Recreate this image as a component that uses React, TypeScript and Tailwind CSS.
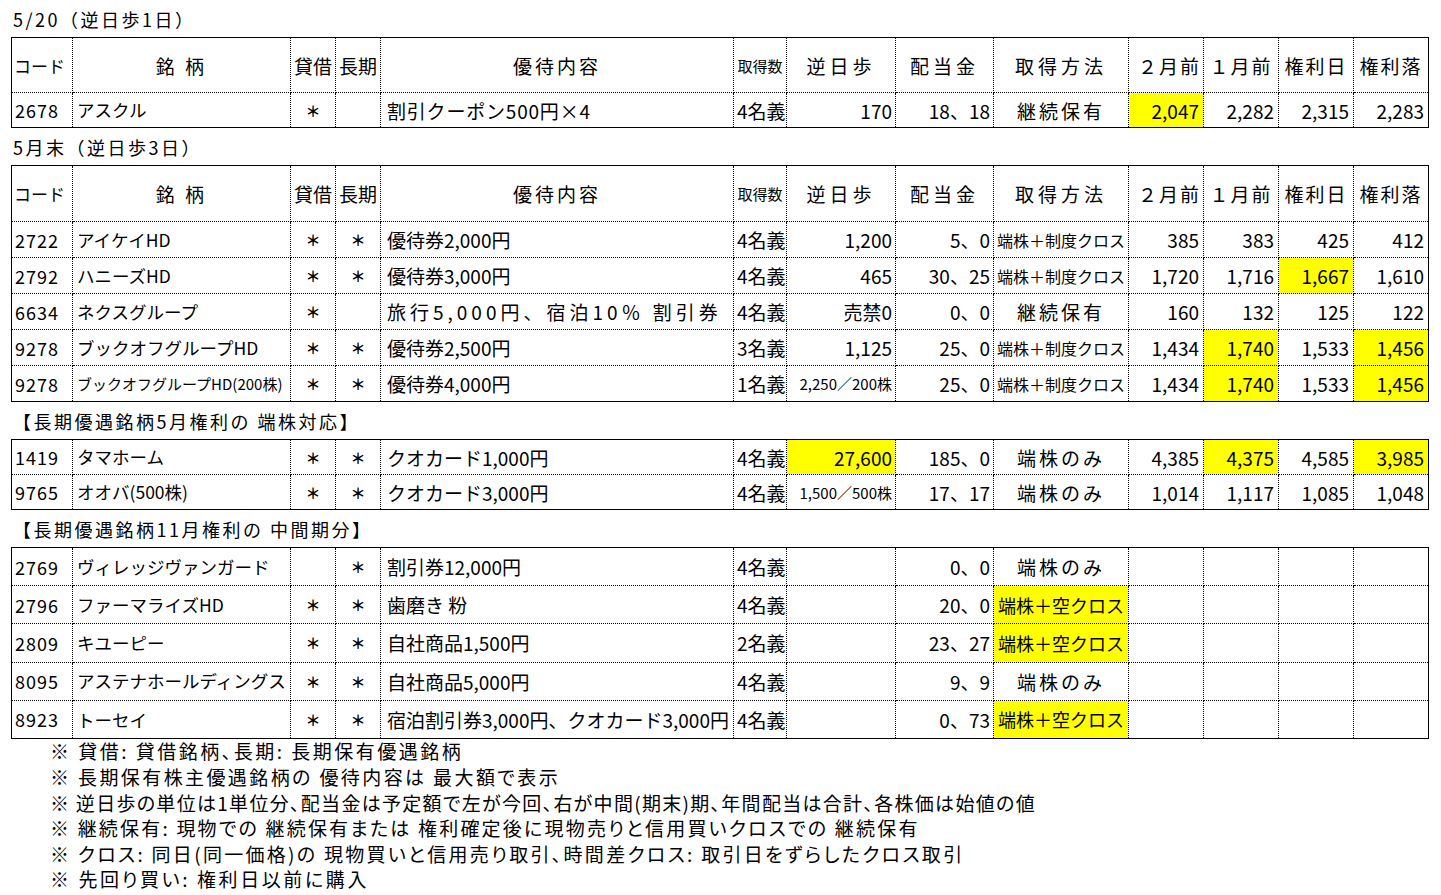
import clsx from "clsx";

type Cell = { v: string; y?: boolean; s?: string; c?: string };
type Row = Cell[];

/* ── スタイル ─────────────────────────────── */
const FONT = "font-['Noto_Sans_CJK_JP','Noto_Sans',sans-serif]";
const TD = "border border-dotted border-black px-[2px] leading-none whitespace-nowrap overflow-hidden";
const YEL = "bg-[#ffff00]";

const WIDTHS = [
  "w-[61px]", "w-[218px]", "w-[45px]", "w-[45px]", "w-[353px]", "w-[53px]",
  "w-[109px]", "w-[98px]", "w-[135px]", "w-[75px]", "w-[75px]", "w-[75px]", "w-[75px]",
];
const ALIGN = [
  "text-left pl-[3px] tracking-[1px]", "text-left pl-[4px]", "text-center", "text-center", "text-left pl-[6px]",
  "text-left pl-[3px]", "text-right pr-[3px]", "text-right pr-[3px]", "text-center",
  "text-right pr-[4px]", "text-right pr-[4px]", "text-right pr-[4px]", "text-right pr-[4px]",
];
const SIZE = [
  "text-[18px]", "text-[17.5px]", "text-[15px] font-bold", "text-[15px] font-bold", "text-[19px]", "text-[19px]",
  "text-[19px]", "text-[19px]", "text-[19px]", "text-[19px]", "text-[19px]", "text-[19px]", "text-[19px]",
];

const HEAD: Cell[] = [
  { v: "コード", s: "text-[17px]", c: "text-left pl-[2px]" },
  { v: "銘 柄", c: "text-center tracking-[3px]" },
  { v: "貸借", c: "text-center" },
  { v: "長期", c: "text-center" },
  { v: "優待内容", c: "text-center tracking-[3px]" },
  { v: "取得数", s: "text-[15px]", c: "text-center px-0" },
  { v: "逆日歩", c: "text-center tracking-[4px]" },
  { v: "配当金", c: "text-center tracking-[4px]" },
  { v: "取得方法", c: "text-center tracking-[4px]" },
  { v: "２月前", c: "text-right tracking-[2px] pr-[2px]" },
  { v: "１月前", c: "text-center tracking-[2px]" },
  { v: "権利日", c: "text-center tracking-[2px]" },
  { v: "権利落", c: "text-center tracking-[2px]" },
];

const r = (...xs: (string | Cell)[]): Row => xs.map(x => (typeof x === "string" ? { v: x } : x));
const HAS = "＊";
const SEIDO: Cell = { v: "端株＋制度クロス", s: "text-[16px]" };
const KARA: Cell = { v: "端株＋空クロス", y: true, s: "text-[18px]" };
const KEIZOKU: Cell = { v: "継続保有", c: "tracking-[3px]" };
const HAKABU: Cell = { v: "端株のみ", c: "tracking-[3px]" };
const per = (v: string): Cell => ({ v, s: "text-[15px]", c: "pl-0 pr-[2px]" });

const T1: Row[] = [
  r("2678", "アスクル", HAS, "", { v: "割引クーポン500円×4", c: "tracking-[0.8px]" }, "4名義", "170", "18、18", KEIZOKU,
    { v: "2,047", y: true }, "2,282", "2,315", "2,283"),
];

const T2: Row[] = [
  r("2722", "アイケイHD", HAS, HAS, "優待券2,000円", "4名義", "1,200", "5、0", SEIDO, "385", "383", "425", "412"),
  r("2792", "ハニーズHD", HAS, HAS, "優待券3,000円", "4名義", "465", "30、25", SEIDO, "1,720", "1,716",
    { v: "1,667", y: true }, "1,610"),
  r("6634", "ネクスグループ", HAS, "", { v: "旅行5,000円、宿泊10％ 割引券", c: "tracking-[4px]" }, "4名義", "売禁0", "0、0",
    KEIZOKU, "160", "132", "125", "122"),
  r("9278", "ブックオフグループHD", HAS, HAS, "優待券2,500円", "3名義", "1,125", "25、0", SEIDO, "1,434",
    { v: "1,740", y: true }, "1,533", { v: "1,456", y: true }),
  r("9278", { v: "ブックオフグループHD(200株)", s: "text-[15px]" }, HAS, HAS, "優待券4,000円", "1名義",
    per("2,250／200株"), "25、0", SEIDO, "1,434", { v: "1,740", y: true }, "1,533", { v: "1,456", y: true }),
];

const T3: Row[] = [
  r("1419", "タマホーム", HAS, HAS, "クオカード1,000円", "4名義", { v: "27,600", y: true }, "185、0", HAKABU,
    "4,385", { v: "4,375", y: true }, "4,585", { v: "3,985", y: true }),
  r("9765", "オオバ(500株)", HAS, HAS, "クオカード3,000円", "4名義", per("1,500／500株"), "17、17", HAKABU,
    "1,014", "1,117", "1,085", "1,048"),
];

const T4: Row[] = [
  r("2769", "ヴィレッジヴァンガード", "", HAS, "割引券12,000円", "4名義", "", "0、0", HAKABU, "", "", "", ""),
  r("2796", "ファーマライズHD", HAS, HAS, "歯磨き 粉", "4名義", "", "20、0", KARA, "", "", "", ""),
  r("2809", "キユーピー", HAS, HAS, "自社商品1,500円", "2名義", "", "23、27", KARA, "", "", "", ""),
  r("8095", "アステナホールディングス", HAS, HAS, "自社商品5,000円", "4名義", "", "9、9", HAKABU, "", "", "", ""),
  r("8923", "トーセイ", HAS, HAS, "宿泊割引券3,000円、クオカード3,000円", "4名義", "", "0、73", KARA, "", "", "", ""),
];

const NOTES: { t: string; c: string }[] = [
  { t: "※ 貸借: 貸借銘柄、長期: 長期保有優遇銘柄", c: "tracking-[2.5px]" },
  { t: "※ 長期保有株主優遇銘柄の 優待内容は 最大額で表示", c: "tracking-[2.4px]" },
  { t: "※ 逆日歩の単位は1単位分、配当金は予定額で左が今回、右が中間(期末)期、年間配当は合計、各株価は始値の値", c: "tracking-[1.3px]" },
  { t: "※ 継続保有: 現物での 継続保有または 権利確定後に現物売りと信用買いクロスでの 継続保有", c: "tracking-[2.2px]" },
  { t: "※ クロス: 同日(同一価格)の 現物買いと信用売り取引、時間差クロス: 取引日をずらしたクロス取引", c: "tracking-[2.3px]" },
  { t: "※ 先回り買い: 権利日以前に購入", c: "tracking-[2.6px]" },
];

function Title({ children }: { children: string }) {
  return (
    <div className="h-[37px] flex items-center pl-[13px] pt-[2px] text-[18px] tracking-[2.5px]">{children}</div>
  );
}

function Sheet({ rows, headH, rowH }: { rows: Row[]; headH?: string; rowH: string }) {
  return (
    <table className="table-fixed border-collapse border border-solid border-black w-[1417px] ml-[11px]">
      <colgroup>
        {WIDTHS.map((w, i) => (
          <col key={i} className={w} />
        ))}
      </colgroup>
      <tbody>
        {headH && (
          <tr className={headH}>
            {HEAD.map((h, i) => (
              <td key={i} className={clsx(TD, h.s ?? "text-[19px]", h.c)}>
                {h.v}
              </td>
            ))}
          </tr>
        )}
        {rows.map((row, ri) => (
          <tr key={ri} className={rowH}>
            {row.map((cell, ci) => (
              <td key={ci} className={clsx(TD, ALIGN[ci], cell.s ?? SIZE[ci], cell.y && YEL, cell.c)}>
                {cell.v}
              </td>
            ))}
          </tr>
        ))}
      </tbody>
    </table>
  );
}

export default function App() {
  return (
    <div className={clsx(FONT, "w-[1441px] h-[895px] bg-white text-black overflow-hidden")}>
      <Title>5/20（逆日歩1日）</Title>
      <Sheet rows={T1} headH="h-[55px]" rowH="h-[35px]" />
      <Title>5月末（逆日歩3日）</Title>
      <Sheet rows={T2} headH="h-[56px]" rowH="h-[36px]" />
      <Title>【長期優遇銘柄5月権利の 端株対応】</Title>
      <Sheet rows={T3} rowH="h-[35px]" />
      <Title>【長期優遇銘柄11月権利の 中間期分】</Title>
      <Sheet rows={T4} rowH="h-[38.2px]" />
      <div className="pl-[50px]">
        {NOTES.map(n => (
          <div
            key={n.t}
            className={clsx(
              "h-[25.6px] flex items-center text-[19px] whitespace-nowrap [font-feature-settings:'palt']",
              n.c
            )}
          >
            {n.t}
          </div>
        ))}
      </div>
    </div>
  );
}
